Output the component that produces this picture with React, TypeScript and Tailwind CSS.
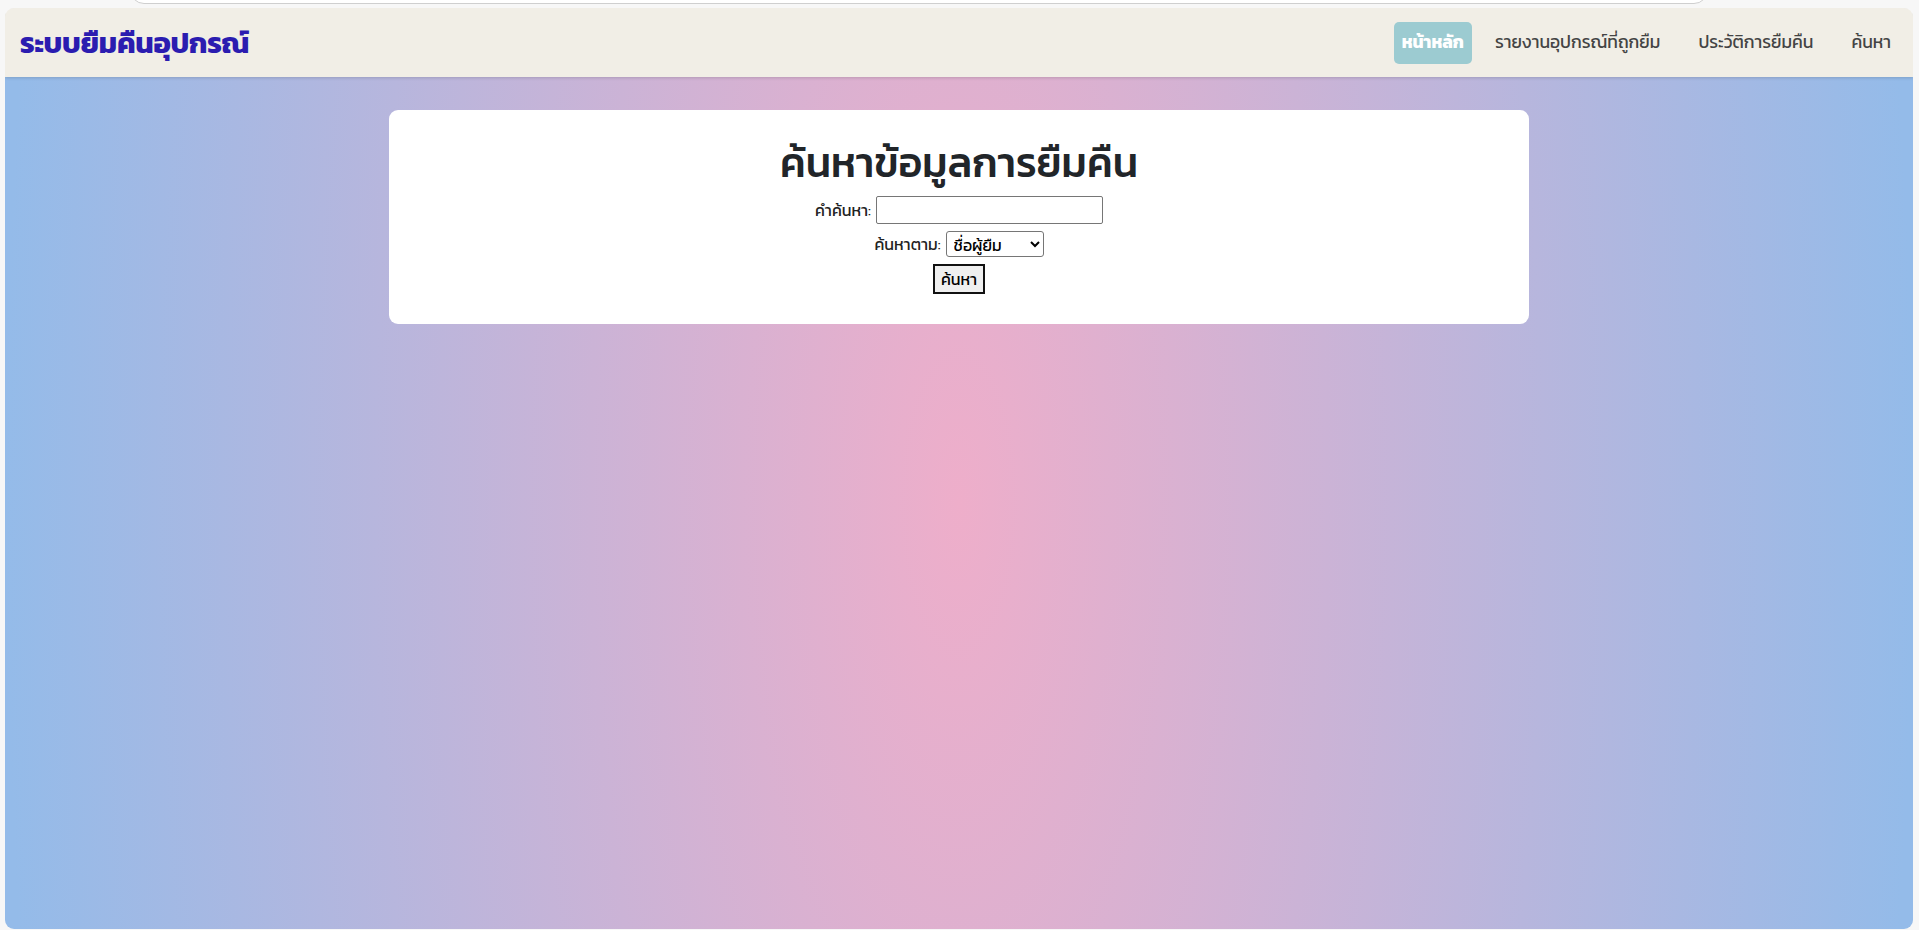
import React from "react";

const thai = "font-['Kanit','Prompt','Noto_Sans_Thai','Noto_Sans',sans-serif]";

export default function App() {
  return (
    <div className="min-h-[930px] bg-[#f7f7f7] px-[5px] pr-[6px] flex flex-col">
      {/* bottom edge of the browser address bar */}
      <div className="h-[8px] relative">
        <div className="absolute left-[125px] right-[205px] top-[-20px] h-[24px] rounded-b-[14px] border border-[#cfcfcf] bg-white" />
      </div>

      <div className={`flex-1 flex flex-col rounded-[9px] overflow-hidden ${thai}`}>
        <nav className="h-[69px] bg-[#f1eee6] flex items-center justify-between pl-[15px] pr-[7px] shadow-[0_1px_3px_rgba(0,0,0,0.15)] relative z-10">
          <span className="text-[29px] font-bold text-[#2b1cb0] tracking-[-0.2px]">ระบบยืมคืนอุปกรณ์</span>
          <div className="flex items-center gap-[8px] text-[17.5px] text-[#444]">
            <a className="h-[42px] flex items-center px-2 rounded-[5px] bg-[#9ccbd1] text-white font-bold">หน้าหลัก</a>
            <a className="px-[15px]">รายงานอุปกรณ์ที่ถูกยืม</a>
            <a className="px-[15px]">ประวัติการยืมคืน</a>
            <a className="px-[15px]">ค้นหา</a>
          </div>
        </nav>

        <main className="flex-1 bg-[radial-gradient(ellipse_50%_300%_at_50%_50%,#eeaeca_0%,#94bbe9_100%)] pt-[33px]">
          <div className="mx-auto w-[1140px] bg-white rounded-[9px] flex flex-col items-center pt-[28px] pb-[30px]">
            <h1 className="text-[41px] font-medium text-[#212529] leading-[1.2]">ค้นหาข้อมูลการยืมคืน</h1>
            <div className="flex items-center gap-[5px] text-[16px] text-[#222] mt-[9px]">
              <label>คำค้นหา:</label>
              <input className="w-[227px] h-[28px] border border-[#767676] rounded-[2px] bg-white" />
            </div>
            <div className="flex items-center gap-[5px] text-[16px] text-[#222] mt-[7px]">
              <label>ค้นหาตาม:</label>
              <select className="w-[98px] h-[26px] border border-[#767676] rounded-[3px] bg-white text-[16px] pl-[3px] text-black">
                <option>ชื่อผู้ยืม</option>
              </select>
            </div>
            <button className="mt-[7px] h-[30px] w-[52px] border-2 border-[#111] bg-[#efefef] text-[16px] text-black">ค้นหา</button>
          </div>
        </main>
      </div>
      <div className="h-[1px]" />
    </div>
  );
}
